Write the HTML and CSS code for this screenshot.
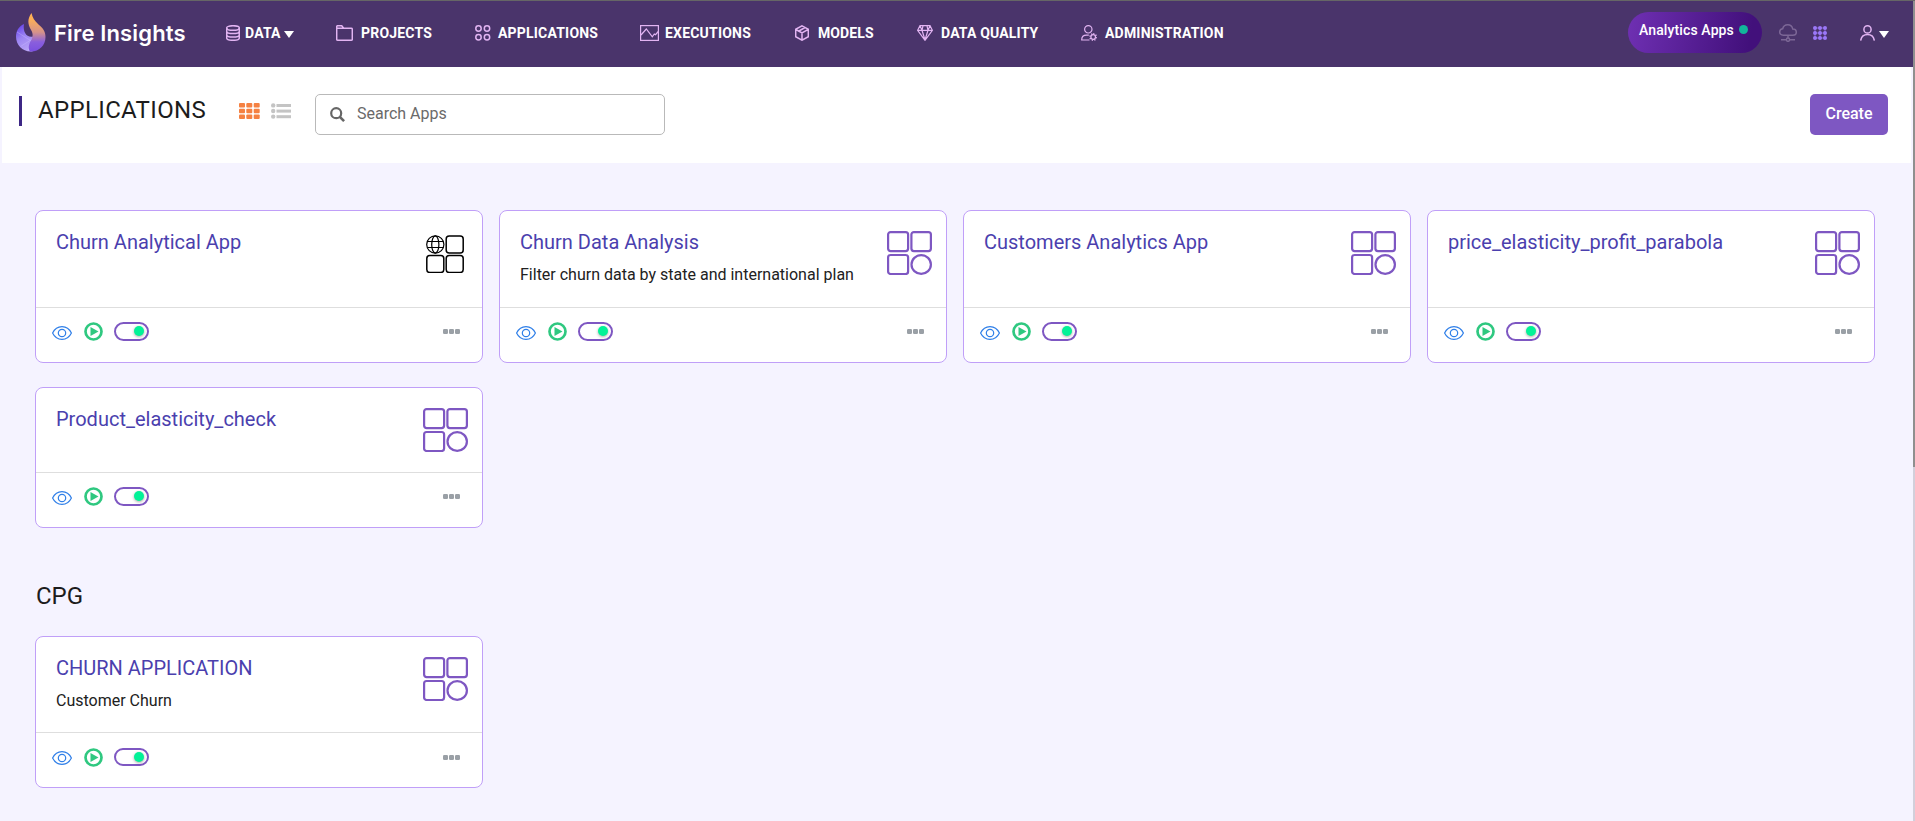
FILE: index.html
```html
<!DOCTYPE html>
<html lang="en">
<head>
<meta charset="utf-8">
<title>Fire Insights - Applications</title>
<link rel="stylesheet" href="styles.css">
</head>
<body>
<svg class="sprite" width="0" height="0">
  <symbol id="app" viewBox="0 0 45 44">
    <g fill="none" stroke="#7e57c2" stroke-width="2.2">
      <rect x="1.1" y="1.1" width="20" height="19" rx="2.5"/>
      <rect x="24.4" y="1.1" width="19.5" height="19" rx="2.5"/>
      <rect x="1.1" y="24" width="20" height="19" rx="2.5"/>
      <ellipse cx="34.2" cy="33.5" rx="9.7" ry="9.4"/>
    </g>
  </symbol>
  <symbol id="webapp" viewBox="0 0 38 38">
    <g fill="none" stroke="#000" stroke-width="1.5">
      <rect x="20.2" y="1" width="17" height="17" rx="3"/>
      <rect x="0.8" y="20.5" width="17" height="17" rx="3"/>
      <rect x="20.2" y="20.5" width="17" height="17" rx="3"/>
      <g stroke-width="1.2"><circle cx="9.3" cy="9.5" r="8.6"/><ellipse cx="9.3" cy="9.5" rx="3.6" ry="8.6"/>
      <path d="M1.5 6.5h15.6M1.5 12.5h15.6"/></g>
    </g>
  </symbol>
  <symbol id="eye" viewBox="0 0 20 14">
    <g fill="none" stroke="#2f7fe8" stroke-width="1.2">
      <path d="M.6 7C2.6 2.8 6 .6 10 .6S17.4 2.8 19.4 7C17.4 11.2 14 13.4 10 13.4S2.6 11.2.6 7z"/>
      <circle cx="10" cy="7" r="3.7"/>
    </g>
  </symbol>
  <symbol id="play" viewBox="0 0 19 19">
    <circle cx="9.5" cy="9.5" r="8" fill="none" stroke="#2fc880" stroke-width="2.7"/>
    <path d="M6.5 5v9l8-4.5z" fill="#2fc880"/>
  </symbol>
  <symbol id="more" viewBox="0 0 17 5">
    <g fill="#9aa0a6"><rect width="5" height="5" rx="1.2"/><rect x="6" width="5" height="5" rx="1.2"/><rect x="12" width="5" height="5" rx="1.2"/></g>
  </symbol>
</svg>

<div class="window">
  <div class="view">
    <header class="topbar">
      <a class="brand">
        <svg class="brand-mark" viewBox="0 0 30 39">
          <defs>
            <linearGradient id="fl" x1="0" y1="0" x2="0" y2="1"><stop offset=".15" stop-color="#fdb055"/><stop offset=".5" stop-color="#d6928a"/><stop offset=".75" stop-color="#8a5fdc"/><stop offset="1" stop-color="#7a4fe0"/></linearGradient>
            <linearGradient id="bl" x1="0" y1="0" x2=".5" y2="1"><stop offset="0" stop-color="#5b36e8"/><stop offset=".5" stop-color="#9c84f2"/><stop offset="1" stop-color="#b9a4f7"/></linearGradient>
          </defs>
          <path d="M8 11C2.5 13.5 0 18.5 0 23.5 0 32 6.5 38.5 14.500 38.500c4 0 7-2.500 7-6L17.500 23.500C11 25.500 6.500 19 8 11z" fill="url(#bl)"/>
          <path d="M1 19l16 10M4.500 33.500L18 25M12 38l5-12" stroke="#c9baff" stroke-width=".7" opacity=".6"/>
          <path d="M15.500 0C11 6 12 11.500 14.500 16c2.500 4 3 7 .500 11.500-2.500 4-3 8-1 11 9 .500 15.500-6 15.500-14.500 0-6-3-9.500-7-12.500C18.500 8 16.500 4.500 15.500 0z" fill="url(#fl)"/>
        </svg>
        <span class="brand-name">Fire Insights</span>
      </a>
      <nav class="nav">
        <a class="nav-item nav-data"><svg width="14" height="16" viewBox="0 0 14 16"><g class="line"><ellipse cx="7" cy="3" rx="6.3" ry="2.3"/><path d="M.7 3v10c0 1.300 2.800 2.300 6.300 2.300s6.300-1 6.300-2.300V3M.7 6.300c0 1.300 2.800 2.300 6.300 2.300s6.300-1 6.300-2.300M.7 9.700c0 1.300 2.800 2.300 6.300 2.300s6.300-1 6.300-2.300"/></g></svg><span>DATA</span><i class="caret"></i></a>
        <a class="nav-item nav-projects"><svg width="17" height="16" viewBox="0 0 17 16"><path class="line" d="M.7 1.700q0-1 1-1h4l2 2.500h7.600q1 0 1 1v10q0 1-1 1H1.700q-1 0-1-1zM.7 3.200h7"/></svg><span>PROJECTS</span></a>
        <a class="nav-item nav-apps"><svg width="16" height="16" viewBox="0 0 16 16"><g class="line"><circle cx="3.500" cy="3.500" r="2.700"/><circle cx="12" cy="3.500" r="2.700"/><circle cx="3.500" cy="12.300" r="2.700"/><circle cx="12" cy="12.300" r="2.700"/></g></svg><span>APPLICATIONS</span></a>
        <a class="nav-item nav-exec"><svg width="19" height="16" viewBox="0 0 19 16"><g class="line thin"><rect x=".6" y=".6" width="17.800" height="14.800"/><path d="M1 10l5.300-6 6 7.800L14.300 9l1.200.7L18.300 6.500"/></g></svg><span>EXECUTIONS</span></a>
        <a class="nav-item nav-models"><svg width="14" height="16" viewBox="0 0 14 16"><path class="line" d="M7 .8l6.300 3.500v7.400L7 15.200.7 11.700V4.300zM.7 4.300L3.500 6 7 7.900l6.300-3.600M7 7.900v7.300M10 2.500L4 6"/></svg><span>MODELS</span></a>
        <a class="nav-item nav-quality"><svg width="16" height="16" viewBox="0 0 16 16"><path class="line thin" d="M3 .7h10l2.400 4.600L8 15.300.6 5.300zM.6 5.300h14.800M5 5.300L8 15l3-9.700M5 5.300L6 .8M11 5.300L10 .8M3 .8l2 4.500M13 .8l-2 4.500"/></svg><span>DATA QUALITY</span></a>
        <a class="nav-item nav-admin"><svg width="16" height="16" viewBox="0 0 16 16"><g class="line thin"><circle cx="7.300" cy="4.300" r="3.700"/><path d="M8.500 15H.7c0-3 1.500-4.800 4.800-4.800h2.300"/><circle cx="12.200" cy="12" r="2.300"/><path stroke-width="1.400" stroke-dasharray="1.200 1.390" d="M12.200 8.700a3.300 3.300 0 1 1 0 6.600 3.300 3.300 0 0 1 0-6.600"/></g></svg><span>ADMINISTRATION</span></a>
      </nav>
      <div class="tools">
        <a class="pill"><span>Analytics Apps</span><i class="dot"></i></a>
        <svg class="cloud" width="18" height="18" viewBox="0 0 18 18"><g fill="none" stroke="#7c6796" stroke-width="1.500"><path d="M4.300 11.200C2 11.200.7 9.800.7 8s1.300-3 3-3.200C4.300 2.300 6.300.8 8.700.8c2.700 0 4.600 1.700 5 4.200 2.200 0 3.600 1.300 3.600 3.200s-1.400 3-3.400 3zM9 11.200v3M2 15.700h5M11 15.700h5"/><circle cx="9" cy="15.700" r="1.600"/></g></svg>
        <svg class="dots" width="14" height="14" viewBox="0 0 14 14"><g fill="#9b78f7"><path opacity=".7" d="M2 1.500h10v1H2zM2 6.500h10v1H2zM2 11.500h10v1H2zM1.500 2h1v10h-1zM6.500 2h1v10h-1zM11.500 2h1v10h-1z"/><circle cx="2" cy="2" r="2"/><circle cx="7" cy="2" r="2"/><circle cx="12" cy="2" r="2"/><circle cx="2" cy="7" r="2"/><circle cx="7" cy="7" r="2"/><circle cx="12" cy="7" r="2"/><circle cx="2" cy="12" r="2"/><circle cx="7" cy="12" r="2"/><circle cx="12" cy="12" r="2"/></g></svg>
        <a class="user"><svg width="15" height="16" viewBox="0 0 15 16"><g class="line" stroke-linecap="round"><circle cx="7.500" cy="4.400" r="3.600"/><path d="M.8 15c.7-3.800 3.200-5.600 6.700-5.600s6 1.800 6.700 5.600"/></g></svg><i class="caret"></i></a>
      </div>
    </header>

    <section class="titlebar">
      <h1>APPLICATIONS</h1>
      <svg class="grid-view" width="21" height="16" viewBox="0 0 21 16"><g fill="#f58142"><rect width="6" height="4.500" rx="1"/><rect x="7.300" width="6" height="4.500" rx="1"/><rect x="14.700" width="6" height="4.500" rx="1"/><rect y="5.800" width="6" height="4.500" rx="1"/><rect x="7.300" y="5.800" width="6" height="4.500" rx="1"/><rect x="14.700" y="5.800" width="6" height="4.500" rx="1"/><rect y="11.500" width="6" height="4.500" rx="1"/><rect x="7.300" y="11.500" width="6" height="4.500" rx="1"/><rect x="14.700" y="11.500" width="6" height="4.500" rx="1"/></g></svg>
      <svg class="list-view" width="20" height="16" viewBox="0 0 20 16"><g fill="#c4c4c4"><circle cx="2.200" cy="2.400" r="2.200"/><circle cx="2.200" cy="8" r="2.200"/><circle cx="2.200" cy="13.600" r="2.200"/><rect x="5.500" y="1" width="14.500" height="3"/><rect x="5.500" y="6.600" width="14.500" height="3"/><rect x="5.500" y="12.200" width="14.500" height="3"/></g></svg>
      <div class="search">
        <svg width="15" height="15" viewBox="0 0 15 15"><g fill="none" stroke="#666" stroke-width="2.200"><circle cx="6.200" cy="6.200" r="5"/><path d="M9.800 9.800l4.300 4.300" stroke-width="2.600"/></g></svg>
        <span>Search Apps</span>
      </div>
      <button class="create">Create</button>
    </section>

    <main class="content">
      <div class="cards">
        <article class="card">
          <div class="card-body"><div class="card-text"><h3>Churn Analytical App</h3></div><svg class="web-icon"><use href="#webapp"/></svg></div>
          <div class="card-foot"><svg class="eye"><use href="#eye"/></svg><svg class="play"><use href="#play"/></svg><span class="toggle"><i></i></span><svg class="more"><use href="#more"/></svg></div>
        </article>
        <article class="card">
          <div class="card-body"><div class="card-text"><h3>Churn Data Analysis</h3><p>Filter churn data by state and international plan</p></div><svg class="app-icon"><use href="#app"/></svg></div>
          <div class="card-foot"><svg class="eye"><use href="#eye"/></svg><svg class="play"><use href="#play"/></svg><span class="toggle"><i></i></span><svg class="more"><use href="#more"/></svg></div>
        </article>
        <article class="card">
          <div class="card-body"><div class="card-text"><h3>Customers Analytics App</h3></div><svg class="app-icon"><use href="#app"/></svg></div>
          <div class="card-foot"><svg class="eye"><use href="#eye"/></svg><svg class="play"><use href="#play"/></svg><span class="toggle"><i></i></span><svg class="more"><use href="#more"/></svg></div>
        </article>
        <article class="card">
          <div class="card-body"><div class="card-text"><h3>price_elasticity_profit_parabola</h3></div><svg class="app-icon"><use href="#app"/></svg></div>
          <div class="card-foot"><svg class="eye"><use href="#eye"/></svg><svg class="play"><use href="#play"/></svg><span class="toggle"><i></i></span><svg class="more"><use href="#more"/></svg></div>
        </article>
        <article class="card compact">
          <div class="card-body"><div class="card-text"><h3>Product_elasticity_check</h3></div><svg class="app-icon"><use href="#app"/></svg></div>
          <div class="card-foot"><svg class="eye"><use href="#eye"/></svg><svg class="play"><use href="#play"/></svg><span class="toggle"><i></i></span><svg class="more"><use href="#more"/></svg></div>
        </article>
      </div>
      <h2>CPG</h2>
      <div class="cards">
        <article class="card medium">
          <div class="card-body"><div class="card-text"><h3>CHURN APPLICATION</h3><p>Customer Churn</p></div><svg class="app-icon"><use href="#app"/></svg></div>
          <div class="card-foot"><svg class="eye"><use href="#eye"/></svg><svg class="play"><use href="#play"/></svg><span class="toggle"><i></i></span><svg class="more"><use href="#more"/></svg></div>
        </article>
      </div>
    </main>
  </div>
  <div class="scroll"><div class="scroll-thumb"></div></div>
</div>
</body>
</html>
```
FILE: styles.css
```css
* { box-sizing: border-box; }
body { margin: 0; font-family: Roboto, "Liberation Sans", sans-serif; background: #f5f3ff; overflow: hidden; }
h1, h2, h3, p { margin: 0; font-weight: 400; }
svg { display: block; flex: none; }
.sprite { position: absolute; }
.window { height: 821px; display: flex; border-top: 1px solid #666; }
.view { flex: 1; min-width: 0; }
.scroll { width: 2px; background: #d2cfdb; }
.scroll-thumb { height: 466px; background: #8f8f8f; }

.topbar { height: 66px; background: #4a346b; display: flex; align-items: flex-start; }
.brand { display: flex; width: 226px; padding: 12px 0 0 16px; }
.brand-mark { width: 30px; height: 39px; }
.brand-name { margin: 5px 0 0 8px; font: 600 22px/30px Inter, sans-serif; letter-spacing: .15px; color: #fff; white-space: nowrap; }
.nav { display: grid; grid-template-columns: 110px 139px 165px 155px 122px 164px 150px; padding-top: 24px; }
.nav-item { display: flex; align-items: center; height: 16px; color: #fff; font-size: 14px; font-weight: 700; letter-spacing: .2px; white-space: nowrap; gap: 8px; }
.nav-data { gap: 5px; }
.nav-apps { gap: 7px; }
.nav-exec { gap: 6px; }
.nav-models { gap: 9px; letter-spacing: .1px; }
.nav-quality { letter-spacing: .17px; }
.line { fill: none; stroke: #e2b4f2; stroke-width: 1.5; }
.thin { stroke-width: 1.2; }
.caret { border: 5px solid transparent; border-top: 7px solid #fff; border-bottom: 0; margin-top: 2px; }
.nav-data .caret { margin-left: -2px; }
.tools { margin-left: auto; display: flex; align-items: flex-start; padding-right: 24px; }
.pill { width: 134px; height: 41px; margin: 11px 17px 0 0; padding: 9px 0 0 11px; border-radius: 21px; background: linear-gradient(100deg, #6f30b3 0%, #42107b 90%); display: flex; gap: 5px; color: #fff; font-weight: 500; font-size: 14px; letter-spacing: .12px; line-height: 18px; white-space: nowrap; }
.dot { width: 9px; height: 9px; margin-top: 4px; border-radius: 50%; background: #12b59b; }
.cloud { margin-top: 23px; }
.dots { margin: 25px 0 0 16px; }
.user { display: flex; align-items: center; gap: 4px; margin: 24px 0 0 33px; }

.titlebar { height: 96px; margin: 0 2px; padding: 27px 23px 0 17px; background: #fff; display: flex; align-items: flex-start; }
h1 { height: 30px; margin-top: 2px; padding-left: 16px; width: 220px; border-left: 3px solid #3d2785; font-size: 24px; letter-spacing: .35px; line-height: 29px; color: #1c1c1c; }
.grid-view { margin-top: 9px; }
.list-view { margin: 9px 0 0 11px; }
.search { width: 350px; height: 41px; margin-left: 24px; padding-left: 14px; border: 1px solid #b9b9b9; border-radius: 5px; display: flex; align-items: center; gap: 12px; font-size: 16px; color: #6a6a6a; }
.search span { line-height: 20px; margin-top: -2px; }
.create { margin-left: auto; width: 78px; height: 41px; border: 0; padding: 0 0 2px; border-radius: 5px; background: #7e57c2; color: #fff; font: 500 16px Roboto, sans-serif; }

.content { padding: 47px 0 0 35px; }
.cards { display: grid; grid-template-columns: repeat(4, 448px); gap: 24px 16px; align-items: start; }
.card { background: #fff; border: 1px solid #c09ff8; border-radius: 8px; }
.card-body { display: flex; justify-content: space-between; height: 96px; padding: 20px 14px 0 20px; }
.compact .card-body { height: 84px; }
.medium .card-body { height: 95px; }
.medium .card-foot { padding-top: 15px; }
.card h3 { margin-top: -1px; font-size: 20px; line-height: 24px; color: #4b3fae; white-space: nowrap; }
.card p { margin-top: 11px; font-size: 16px; line-height: 19px; color: #212121; white-space: nowrap; }
.app-icon { width: 45px; height: 44px; }
.web-icon { width: 38px; height: 38px; margin: 4px 4px 0 0; }
.card-foot { height: 55px; padding: 14px 22px 0 16px; border-top: 1px solid #dedede; display: flex; align-items: flex-start; }
.eye { width: 20px; height: 14px; margin-top: 4px; }
.medium .eye { margin-top: 3px; }
.play { width: 19px; height: 19px; margin-left: 12px; }
.toggle { width: 35px; height: 19px; margin-left: 11px; border: 2px solid #7e57c2; border-radius: 10px; display: flex; justify-content: flex-end; padding: 2px 3px 0 0; }
.medium .toggle { height: 18px; }
.toggle i { width: 10px; height: 10px; border-radius: 50%; background: #02f297; box-shadow: 0 1px 3px rgba(0,0,0,.35); }
.more { width: 17px; height: 5px; margin: 7px 0 0 auto; }
h2 { margin: 54px 0 26px; padding-left: 1px; font-size: 24px; line-height: 28px; color: #1c1c1c; }
```
